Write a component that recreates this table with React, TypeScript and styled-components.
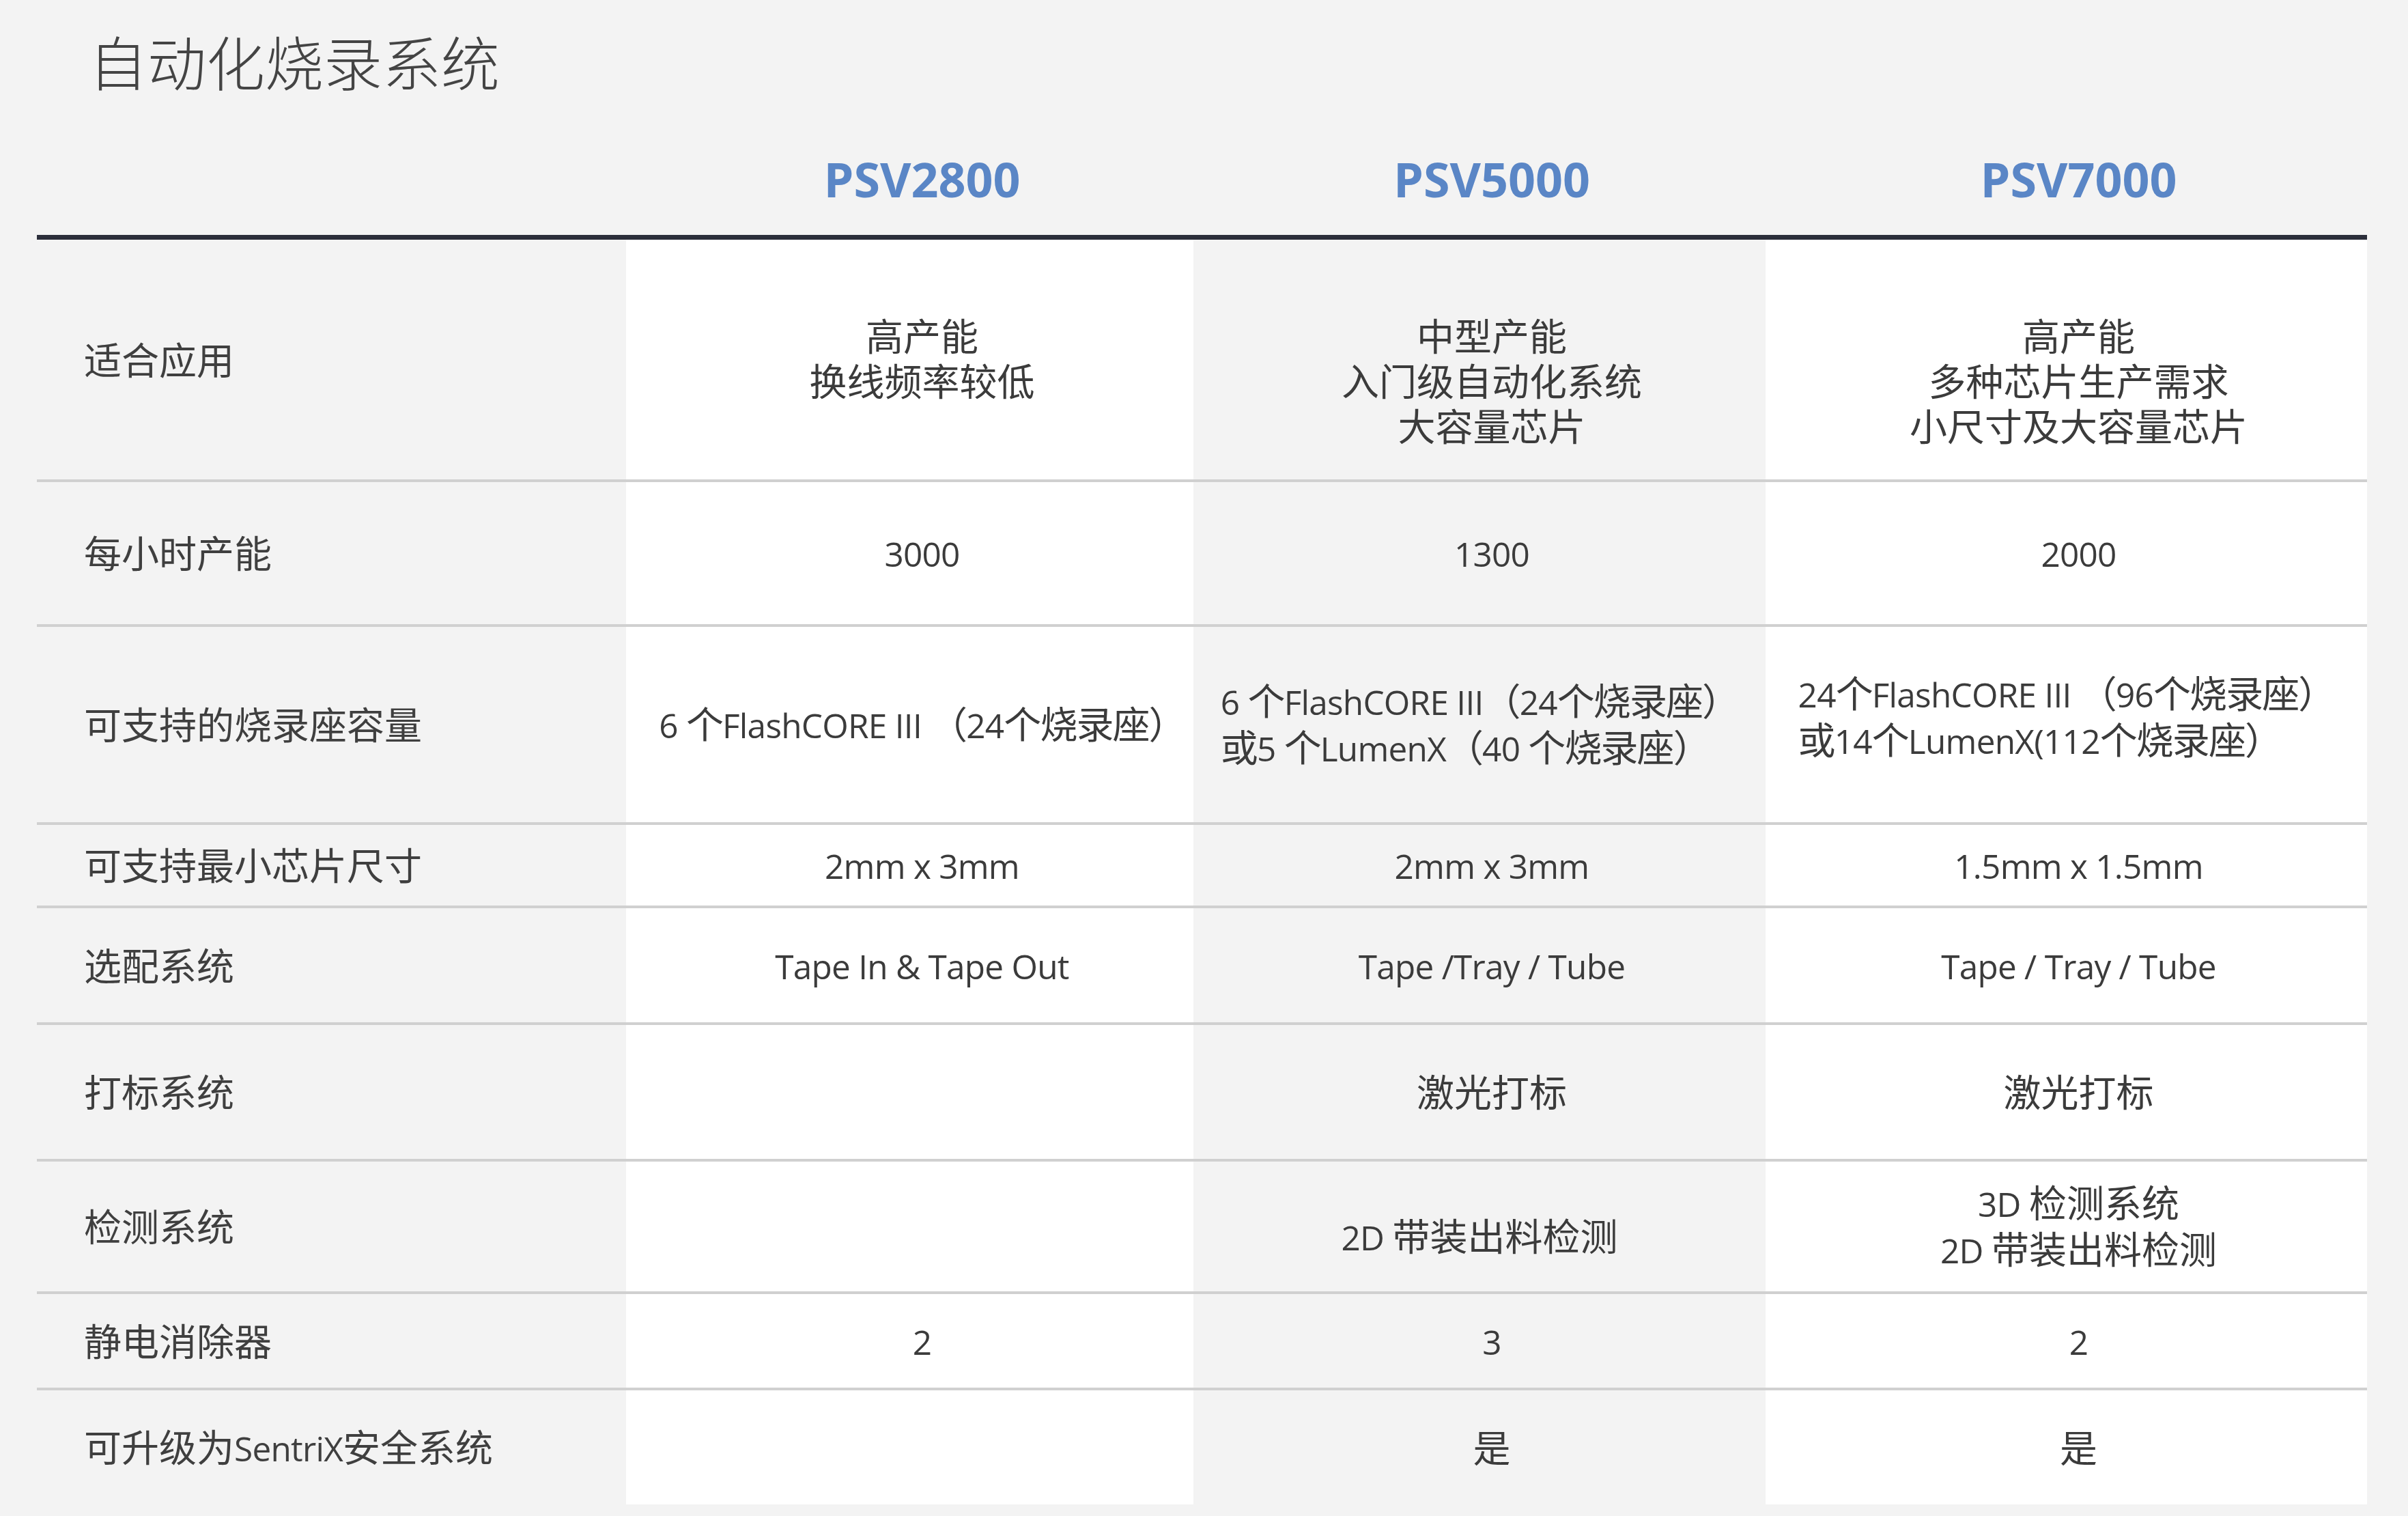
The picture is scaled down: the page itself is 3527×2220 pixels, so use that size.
import React from "react";
import styled, { createGlobalStyle } from "styled-components";

const GlobalStyle = createGlobalStyle`
  html, body {
    margin: 0;
    padding: 0;
    background: #f3f3f3;
  }
  * { box-sizing: border-box; }
`;

const COLS = "863px 831px 838px 881px";

const Page = styled.div`
  min-height: 2220px;
  background: #f3f3f3;
  padding: 46px 60px 17px 54px;
  font-family: "Open Sans", "Noto Sans CJK SC", sans-serif;
  color: #3b3b3b;
`;

const Title = styled.h1`
  margin: 0;
  padding-left: 76px;
  font-family: "Noto Sans CJK SC", sans-serif;
  font-weight: 300;
  font-size: 86px;
  line-height: 86px;
  color: #444444;
`;

const Table = styled.div`
  display: flex;
  flex-direction: column;
`;

const HeaderRow = styled.div`
  display: grid;
  grid-template-columns: ${COLS};
  height: 219px;
  padding-top: 48px;
  border-bottom: 7px solid #2b2e3a;
`;

const ModelName = styled.div`
  display: flex;
  align-items: center;
  justify-content: center;
  padding-left: 36px;
  font-family: "Open Sans", sans-serif;
  font-weight: 700;
  font-size: 70px;
  color: #5a86c6;
`;

const Row = styled.div<{ $h: number; $last?: boolean }>`
  display: grid;
  grid-template-columns: ${COLS};
  height: ${(p) => p.$h + (p.$last ? 0 : 4)}px;
  border-bottom: ${(p) => (p.$last ? "none" : "4px solid #d0d0d0")};
`;

const Label = styled.div`
  display: flex;
  align-items: center;
  padding-left: 69px;
  font-size: 55px;
  line-height: 66px;
  color: #3f3f3f;
`;

const Cell = styled.div<{
  $white: boolean;
  $top?: boolean;
  $left?: boolean;
  $flush?: boolean;
  $dense?: boolean;
  $shift?: number;
}>`
  display: flex;
  align-items: ${(p) => (p.$top ? "flex-start" : "center")};
  justify-content: center;
  background: ${(p) => (p.$white ? "#ffffff" : "transparent")};
  padding-left: ${(p) => (p.$left || p.$flush ? 0 : 36)}px;
  padding-top: ${(p) =>
    p.$top ? 108 : p.$shift && p.$shift > 0 ? p.$shift * 2 : 0}px;
  padding-bottom: ${(p) =>
    p.$shift && p.$shift < 0 ? -p.$shift * 2 : 0}px;
  font-size: 55px;
  line-height: 66px;
  letter-spacing: ${(p) => (p.$dense ? "-0.035em" : "0")};
  text-align: ${(p) => (p.$left ? "left" : "center")};
  color: #3b3b3b;
`;

const Lines = styled.div`
  display: flex;
  flex-direction: column;
`;

const Line = styled.div`
  white-space: nowrap;
`;

const Latin = styled.span`
  font-family: "Open Sans", sans-serif;
  font-size: 0.9em;
  letter-spacing: -0.015em;
`;

function Mixed({ text }: { text: string }) {
  const parts = text.split(/([\x20-\x7E]+)/).filter((s) => s.length > 0);
  return (
    <>
      {parts.map((s, i) =>
        /^[\x20-\x7E]+$/.test(s) ? (
          <Latin key={i}>{s}</Latin>
        ) : (
          <React.Fragment key={i}>{s}</React.Fragment>
        )
      )}
    </>
  );
}

type CellData = {
  lines: string[];
  left?: boolean;
  flush?: boolean;
  dense?: boolean;
  shift?: number;
};
type RowData = { label: string; h: number; top?: boolean; cells: CellData[] };

const rows: RowData[] = [
  {
    label: "适合应用",
    h: 351,
    top: true,
    cells: [
      { lines: ["高产能", "换线频率较低"] },
      { lines: ["中型产能", "入门级自动化系统", "大容量芯片"] },
      { lines: ["高产能", "多种芯片生产需求", "小尺寸及大容量芯片"] },
    ],
  },
  {
    label: "每小时产能",
    h: 208,
    cells: [{ lines: ["3000"] }, { lines: ["1300"] }, { lines: ["2000"] }],
  },
  {
    label: "可支持的烧录座容量",
    h: 286,
    cells: [
      { lines: ["6 个FlashCORE III （24个烧录座）"], dense: true },
      {
        lines: ["6 个FlashCORE III（24个烧录座）", "或5 个LumenX（40 个烧录座）"],
        left: true,
        dense: true,
      },
      {
        lines: ["24个FlashCORE III （96个烧录座）", "或14个LumenX(112个烧录座）"],
        left: true,
        dense: true,
        shift: -11,
      },
    ],
  },
  {
    label: "可支持最小芯片尺寸",
    h: 118,
    cells: [
      { lines: ["2mm x 3mm"] },
      { lines: ["2mm x 3mm"] },
      { lines: ["1.5mm x 1.5mm"] },
    ],
  },
  {
    label: "选配系统",
    h: 167,
    cells: [
      { lines: ["Tape In & Tape Out"] },
      { lines: ["Tape /Tray / Tube"] },
      { lines: ["Tape / Tray / Tube"] },
    ],
  },
  {
    label: "打标系统",
    h: 196,
    cells: [{ lines: [] }, { lines: ["激光打标"] }, { lines: ["激光打标"] }],
  },
  {
    label: "检测系统",
    h: 190,
    cells: [
      { lines: [] },
      { lines: ["2D 带装出料检测"], shift: 15, flush: true },
      { lines: ["3D 检测系统", "2D 带装出料检测"] },
    ],
  },
  {
    label: "静电消除器",
    h: 137,
    cells: [{ lines: ["2"] }, { lines: ["3"] }, { lines: ["2"] }],
  },
  {
    label: "可升级为SentriX安全系统",
    h: 167,
    cells: [{ lines: [] }, { lines: ["是"] }, { lines: ["是"] }],
  },
];

const models = ["PSV2800", "PSV5000", "PSV7000"];

export default function App() {
  return (
    <>
      <GlobalStyle />
      <Page>
        <Title>自动化烧录系统</Title>
        <Table>
          <HeaderRow>
            <div />
            {models.map((m) => (
              <ModelName key={m}>{m}</ModelName>
            ))}
          </HeaderRow>
          {rows.map((r, ri) => (
            <Row key={r.label} $h={r.h} $last={ri === rows.length - 1}>
              <Label>
                <Line>
                  <Mixed text={r.label} />
                </Line>
              </Label>
              {r.cells.map((c, ci) => (
                <Cell
                  key={ci}
                  $white={ci !== 1}
                  $top={r.top}
                  $left={c.left}
                  $flush={c.flush}
                  $dense={c.dense}
                  $shift={c.shift}
                >
                  <Lines>
                    {c.lines.map((l, li) => (
                      <Line key={li}>
                        <Mixed text={l} />
                      </Line>
                    ))}
                  </Lines>
                </Cell>
              ))}
            </Row>
          ))}
        </Table>
      </Page>
    </>
  );
}
